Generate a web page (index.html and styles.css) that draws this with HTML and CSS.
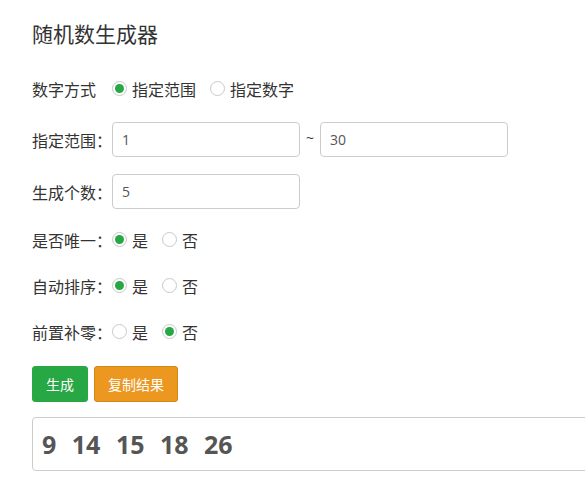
FILE: index.html
```html
<!DOCTYPE html>
<html lang="zh-CN">
<head>
<meta charset="utf-8">
<title>随机数生成器</title>
<link rel="stylesheet" href="styles.css">
</head>
<body>
<div class="page">
  <h1 class="title">随机数生成器</h1>

  <div class="row row-first">
    <span class="label">数字方式</span>
    <span class="opt"><span class="radio checked"></span>指定范围</span>
    <span class="opt"><span class="radio"></span>指定数字</span>
  </div>

  <div class="row row-input">
    <span class="label">指定范围：</span>
    <input class="field" type="text" value="1">
    <span class="tilde">~</span>
    <input class="field" type="text" value="30">
  </div>

  <div class="row row-input2">
    <span class="label">生成个数：</span>
    <input class="field" type="text" value="5">
  </div>

  <div class="row row-radio">
    <span class="label">是否唯一：</span>
    <span class="opt"><span class="radio checked"></span>是</span>
    <span class="opt"><span class="radio"></span>否</span>
  </div>

  <div class="row row-radio">
    <span class="label">自动排序：</span>
    <span class="opt"><span class="radio checked"></span>是</span>
    <span class="opt"><span class="radio"></span>否</span>
  </div>

  <div class="row row-radio row-last">
    <span class="label">前置补零：</span>
    <span class="opt"><span class="radio"></span>是</span>
    <span class="opt"><span class="radio checked"></span>否</span>
  </div>

  <div class="buttons">
    <button class="btn btn-green">生成</button>
    <button class="btn btn-orange">复制结果</button>
  </div>

  <div class="result">
    <span>9</span><span>14</span><span>15</span><span>18</span><span>26</span>
  </div>
</div>
</body>
</html>
```

FILE: styles.css
```css
html, body {
  margin: 0;
  padding: 0;
  background: #fff;
  overflow: hidden;
}

.page {
  padding: 19px 0 0 32px;
  font-family: "Noto Sans CJK SC", "Open Sans", sans-serif;
  color: #333;
  font-size: 16px;
  overflow: hidden;
  width: 553px;
}

.title {
  margin: 0 0 24px 0;
  font-size: 21px;
  font-weight: normal;
  line-height: 28px;
  color: #333;
}

.row {
  display: flex;
  align-items: center;
  height: 35px;
}

.row-first { margin-bottom: 16px; }
.row-input { margin-bottom: 17px; }
.row-input2 { margin-bottom: 15px; }
.row-radio { height: 31px; margin-bottom: 15px; }
.row-last { margin-bottom: 19px; }

.label {
  width: 80px;
  flex: none;
  line-height: 20px;
}

.opt {
  display: flex;
  align-items: center;
  margin-right: 14px;
  line-height: 20px;
}

.radio {
  width: 13px;
  height: 13px;
  border: 1px solid #c9c9c9;
  border-radius: 50%;
  margin-right: 5px;
  display: flex;
  align-items: center;
  justify-content: center;
  box-sizing: content-box;
  background: #fff;
}

.radio.checked::after {
  content: "";
  width: 9px;
  height: 9px;
  border-radius: 50%;
  background: #28a745;
}

.field {
  width: 188px;
  height: 35px;
  box-sizing: border-box;
  border: 1px solid #ccc;
  border-radius: 4px;
  padding: 0 9px;
  font-family: "Open Sans", sans-serif;
  font-size: 14px;
  color: #555;
  outline: none;
  margin: 0;
}

.tilde {
  width: 20px;
  text-align: center;
  font-family: "Open Sans", sans-serif;
  font-size: 14px;
  color: #333;
  margin-top: -4px;
}

.buttons {
  display: flex;
  gap: 6px;
  margin-bottom: 15px;
}

.btn {
  height: 36px;
  padding: 0 13px;
  border-radius: 3px;
  font-family: "Noto Sans CJK SC", sans-serif;
  font-size: 14px;
  color: #fff;
  cursor: pointer;
  margin: 0;
}

.btn-green {
  background: #28a745;
  border: 1px solid #28a745;
}

.btn-orange {
  background: #ec971f;
  border: 1px solid #d58512;
}

.result {
  width: 560px;
  height: 54px;
  box-sizing: border-box;
  border: 1px solid #ccc;
  border-radius: 4px;
  padding: 0 9px;
  display: flex;
  align-items: center;
  gap: 15.5px;
  font-family: "Open Sans", sans-serif;
  font-weight: bold;
  font-size: 25px;
  color: #555;
}
```
